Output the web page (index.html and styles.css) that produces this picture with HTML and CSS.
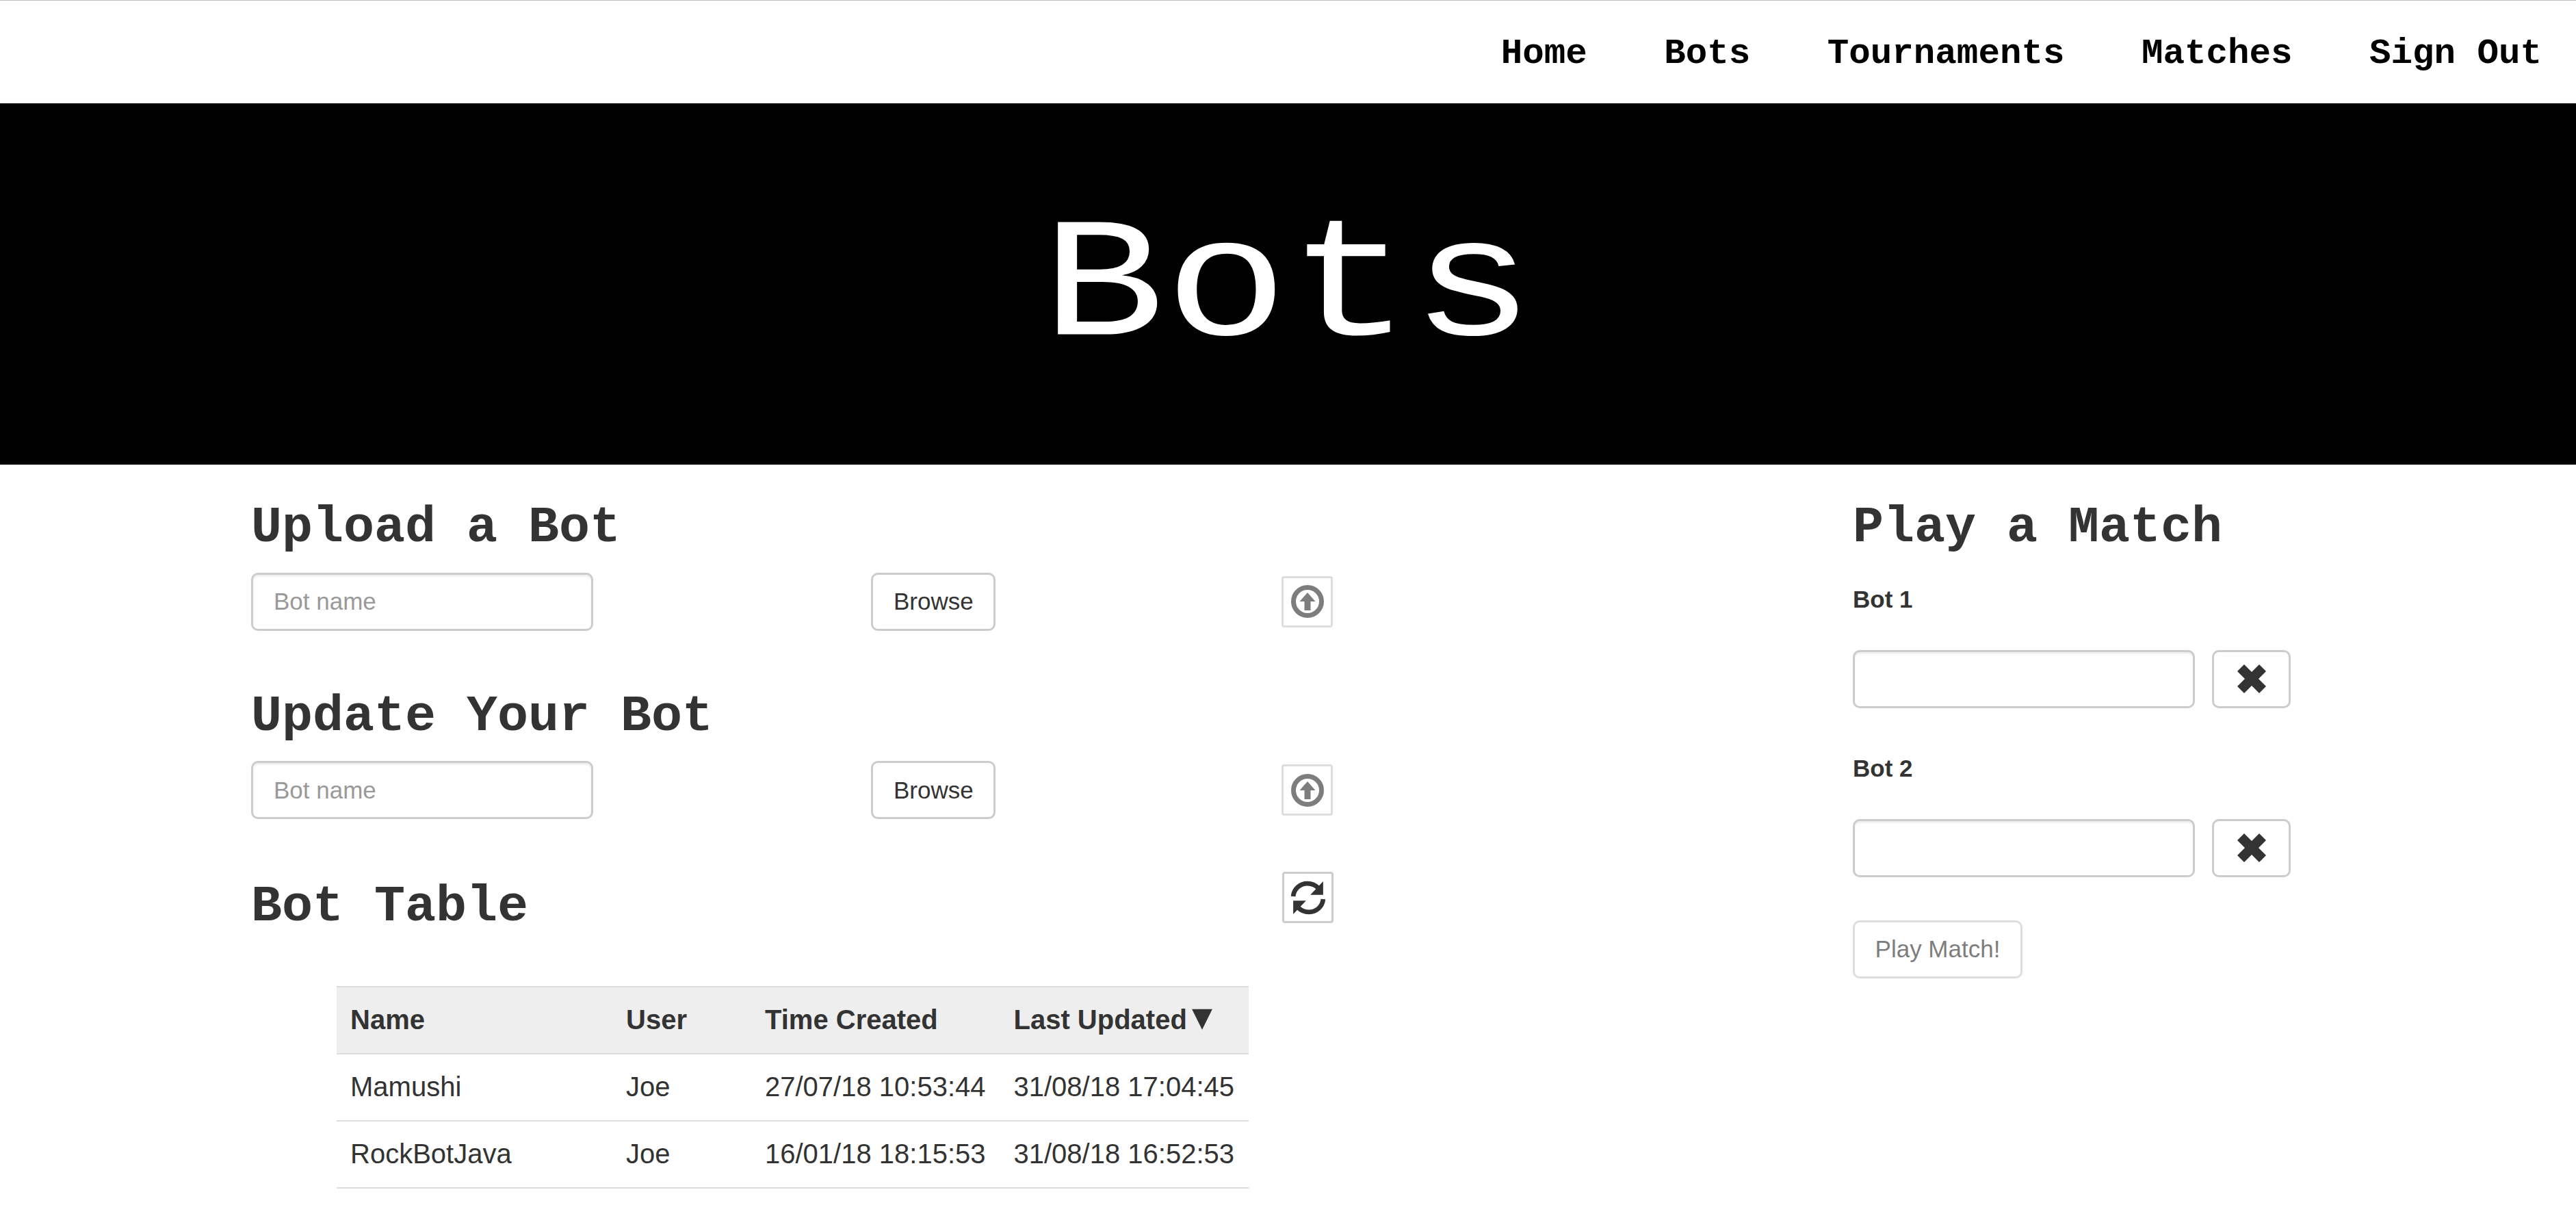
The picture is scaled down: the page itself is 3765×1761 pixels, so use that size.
FILE: index.html
```html
<!DOCTYPE html>
<html lang="en">
<head>
    <meta charset="UTF-8">
    <title>Bots</title>
    <link rel="stylesheet" href="styles.css">
</head>
<body>
    <nav class="topnav">
        <a href="#">Home</a>
        <a href="#">Bots</a>
        <a href="#">Tournaments</a>
        <a href="#">Matches</a>
        <a href="#">Sign Out</a>
    </nav>
    <header class="banner">
        <h1>Bots</h1>
    </header>
    <main class="content">
        <section class="left-col">
            <h2>Upload a Bot</h2>
            <form class="bot-form">
                <input class="text-input" type="text" placeholder="Bot name">
                <button type="button" class="btn browse-btn">Browse</button>
                <button type="button" class="icon-btn disabled">
                    <svg viewBox="0 0 48 48" width="48" height="48"><circle cx="24" cy="24" r="20.5" fill="none" stroke="#333" stroke-width="7"/><path d="M24 11 L35.5 24 H28.5 V37 H19.5 V24 H12.5 Z" fill="#333"/></svg>
                </button>
            </form>
            <h2>Update Your Bot</h2>
            <form class="bot-form">
                <input class="text-input" type="text" placeholder="Bot name">
                <button type="button" class="btn browse-btn">Browse</button>
                <button type="button" class="icon-btn disabled">
                    <svg viewBox="0 0 48 48" width="48" height="48"><circle cx="24" cy="24" r="20.5" fill="none" stroke="#333" stroke-width="7"/><path d="M24 11 L35.5 24 H28.5 V37 H19.5 V24 H12.5 Z" fill="#333"/></svg>
                </button>
            </form>
            <div class="table-head">
                <h2>Bot Table</h2>
                <button type="button" class="icon-btn">
                    <svg viewBox="0 0 48 48" width="50" height="50"><path d="M3 22 C4 11 13 4 23 4 C30 4 35 7 39 11" fill="none" stroke="#333" stroke-width="6.5"/><path d="M45 1 V20 H27 Z" fill="#333"/><path d="M45 26 C44 37 35 44 25 44 C18 44 13 41 9 37" fill="none" stroke="#333" stroke-width="6.5"/><path d="M3 47 V28 H21 Z" fill="#333"/></svg>
                </button>
            </div>
            <table class="bot-table">
                <thead>
                    <tr>
                        <th class="col-name">Name</th>
                        <th class="col-user">User</th>
                        <th class="col-created">Time Created</th>
                        <th>Last Updated<span class="sort-arrow">▼</span></th>
                    </tr>
                </thead>
                <tbody>
                    <tr>
                        <td>Mamushi</td>
                        <td>Joe</td>
                        <td>27/07/18 10:53:44</td>
                        <td>31/08/18 17:04:45</td>
                    </tr>
                    <tr>
                        <td>RockBotJava</td>
                        <td>Joe</td>
                        <td>16/01/18 18:15:53</td>
                        <td>31/08/18 16:52:53</td>
                    </tr>
                </tbody>
            </table>
        </section>
        <section class="right-col">
            <h2>Play a Match</h2>
            <label class="bot-label">Bot 1</label>
            <div class="pick-row">
                <input class="text-input" type="text">
                <button type="button" class="btn clear-btn">
                    <svg viewBox="0 0 42 42" width="42" height="42"><path d="M10 0 L21 11 L32 0 L42 10 L31 21 L42 32 L32 42 L21 31 L10 42 L0 32 L11 21 L0 10 Z" fill="#333"/></svg>
                </button>
            </div>
            <label class="bot-label">Bot 2</label>
            <div class="pick-row">
                <input class="text-input" type="text">
                <button type="button" class="btn clear-btn">
                    <svg viewBox="0 0 42 42" width="42" height="42"><path d="M10 0 L21 11 L32 0 L42 10 L31 21 L42 32 L32 42 L21 31 L10 42 L0 32 L11 21 L0 10 Z" fill="#333"/></svg>
                </button>
            </div>
            <button type="button" class="btn play-btn">Play Match!</button>
        </section>
    </main>
</body>
</html>
```

FILE: styles.css
```css
html, body {
    margin: 0;
    padding: 0;
    height: 100%;
    overflow: hidden;
}

body {
    font-family: "Liberation Sans", Arial, sans-serif;
    font-size: 35px;
    color: #333;
    background-color: #fff;
}

.topnav {
    display: flex;
    justify-content: flex-end;
    align-items: center;
    gap: 112.5px;
    box-sizing: content-box;
    height: 147px;
    padding: 3px 50px 0 0;
    border-top: 1px solid #bbb;
}

.topnav a {
    font-family: "Liberation Mono", monospace;
    font-size: 52.5px;
    font-weight: bold;
    color: #000;
    text-decoration: none;
    white-space: pre;
}

.banner {
    height: 528px;
    background-color: #000;
    display: flex;
    justify-content: center;
    align-items: center;
}

.banner h1 {
    margin: 0 0 8px;
    font-family: "Liberation Mono", monospace;
    font-size: 300px;
    font-weight: normal;
    line-height: 1.1;
    color: #fff;
    transform: scaleY(.83);
    transform-origin: 50% 70%;
}

.content {
    display: grid;
    grid-template-columns: 2341px 1fr;
    padding-left: 367px;
}

.left-col {
    display: flex;
    flex-direction: column;
    align-items: flex-start;
}

h2 {
    margin: 52px 0 23px;
    font-family: "Liberation Mono", monospace;
    font-size: 75px;
    font-weight: bold;
    line-height: 1.1;
    color: #333;
}

.bot-form {
    display: flex;
    align-items: center;
    margin-bottom: 33px;
}

.text-input {
    box-sizing: border-box;
    width: 500px;
    height: 85px;
    padding: 15px 30px;
    font-family: inherit;
    font-size: 35px;
    color: #555;
    background-color: #fff;
    border: 3px solid #ccc;
    border-radius: 10px;
    box-shadow: inset 0 2.5px 2.5px rgba(0, 0, 0, .075);
}

.text-input::placeholder {
    color: #999;
}

.btn {
    box-sizing: border-box;
    height: 85px;
    padding: 0 30px;
    font-family: inherit;
    font-size: 35px;
    color: #333;
    background-color: #fff;
    border: 3px solid #ccc;
    border-radius: 10px;
}

.browse-btn {
    width: 182px;
    margin-left: 406px;
}

.icon-btn {
    box-sizing: border-box;
    display: flex;
    justify-content: center;
    align-items: center;
    width: 75px;
    height: 75px;
    padding: 0;
    background-color: #fff;
    border: 3px solid #ccc;
    border-radius: 4px;
}

.bot-form .icon-btn {
    margin-left: 418px;
}

.disabled {
    opacity: .63;
}

.table-head {
    display: flex;
    justify-content: space-between;
    align-items: flex-start;
    width: 1582px;
}

.table-head h2 {
    margin-top: 55px;
}

.table-head .icon-btn {
    margin-top: 44px;
}

.bot-table {
    width: 1333px;
    margin: 50px 0 0 125px;
    border-collapse: collapse;
    font-size: 40px;
    color: #333;
}

.bot-table th,
.bot-table td {
    height: 96px;
    padding: 0 20px;
    text-align: left;
    white-space: nowrap;
    border-bottom: 2.5px solid #ddd;
}

.bot-table th {
    background-color: #eee;
    border-top: 2.5px solid #ddd;
}

.col-name {
    width: 363px;
}

.col-user {
    width: 163px;
}

.sort-arrow {
    margin-left: -3px;
    font-size: 51px;
    line-height: 1px;
}

.bot-label {
    display: block;
    margin-top: 37px;
    margin-bottom: 49px;
    line-height: 50px;
    font-weight: bold;
}

.pick-row {
    display: flex;
    gap: 25px;
    margin-bottom: 63px;
}

.clear-btn {
    display: flex;
    justify-content: center;
    align-items: center;
    width: 115px;
    padding: 0;
}

.play-btn {
    display: block;
    width: 248px;
    padding: 0;
    opacity: .63;
}
```
